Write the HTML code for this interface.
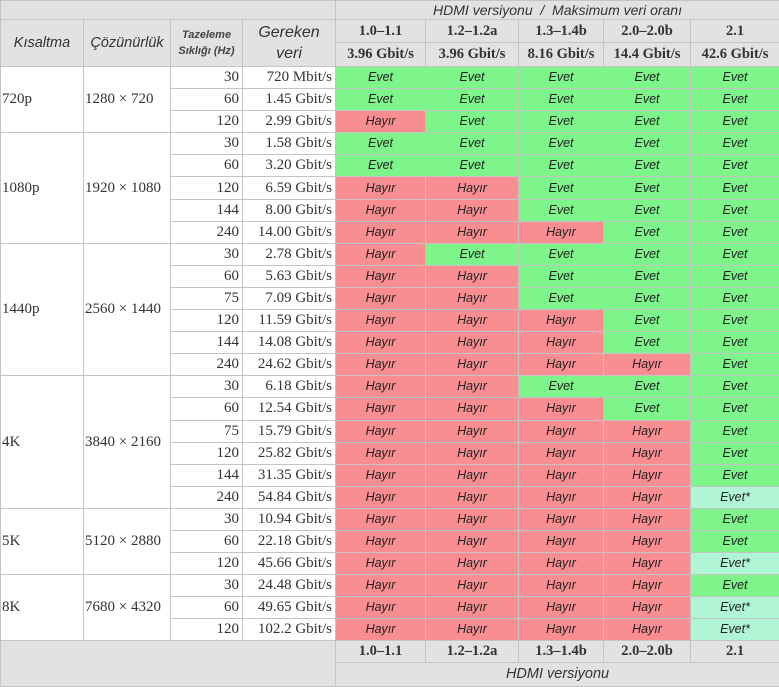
<!DOCTYPE html><html><head><meta charset="utf-8"><style>
body{margin:0;background:#fff;width:779px;height:687px;overflow:hidden}
table{border-collapse:collapse;table-layout:fixed;width:779px;font-family:"Liberation Serif",serif;font-size:15px;color:#333}
td{border:1px solid #c4c4c4;padding:0;overflow:hidden;white-space:nowrap;vertical-align:middle;line-height:15px}
tr.d td{height:21.1px}
.h{background:#e2e2e2;text-align:center}
.i{font-family:"Liberation Sans",sans-serif;font-style:italic}
.v{font-weight:bold;font-size:14.5px}
.g,.r,.c{font-family:"Liberation Sans",sans-serif;font-style:italic;font-size:12.5px;text-align:center;color:#222}
.g{background:#7df58a}.r{background:#f98e92}.c{background:#b0f6d6}
.n{text-align:right;padding-right:3px}
.l{padding-left:1px}
</style></head><body>
<table>
<colgroup><col style="width:83px"><col style="width:87px"><col style="width:72px"><col style="width:93px"><col style="width:90px"><col style="width:93px"><col style="width:85px"><col style="width:87px"><col style="width:89px"></colgroup>
<tr style="height:19px"><td class="h i" colspan="4" style="height:18px"></td><td class="h i" colspan="5" style="font-size:14px;height:18px">HDMI versiyonu &nbsp;/&nbsp; Maksimum veri oranı</td></tr>
<tr style="height:23px"><td class="h i" rowspan="2" style="font-size:14.5px">Kısaltma</td><td class="h i" rowspan="2" style="font-size:14.5px">Çözünürlük</td><td class="h i" rowspan="2" style="font-size:11px;line-height:16px;font-weight:bold;color:#444">Tazeleme<br>Sıklığı (Hz)</td><td class="h i" rowspan="2" style="font-size:16px;line-height:21px">Gereken<br>veri</td><td class="h v" style="height:22px">1.0–1.1</td><td class="h v">1.2–1.2a</td><td class="h v">1.3–1.4b</td><td class="h v">2.0–2.0b</td><td class="h v">2.1</td></tr>
<tr style="height:24px"><td class="h v" style="height:23px">3.96 Gbit/s</td><td class="h v">3.96 Gbit/s</td><td class="h v">8.16 Gbit/s</td><td class="h v">14.4 Gbit/s</td><td class="h v">42.6 Gbit/s</td></tr>

<tr class="d"><td class="l" rowspan="3">720p</td><td class="l" rowspan="3">1280 × 720</td><td class="n">30</td><td class="n">720 Mbit/s</td><td class="g">Evet</td><td class="g">Evet</td><td class="g">Evet</td><td class="g">Evet</td><td class="g">Evet</td></tr>
<tr class="d"><td class="n">60</td><td class="n">1.45 Gbit/s</td><td class="g">Evet</td><td class="g">Evet</td><td class="g">Evet</td><td class="g">Evet</td><td class="g">Evet</td></tr>
<tr class="d"><td class="n">120</td><td class="n">2.99 Gbit/s</td><td class="r">Hayır</td><td class="g">Evet</td><td class="g">Evet</td><td class="g">Evet</td><td class="g">Evet</td></tr>

<tr class="d"><td class="l" rowspan="5">1080p</td><td class="l" rowspan="5">1920 × 1080</td><td class="n">30</td><td class="n">1.58 Gbit/s</td><td class="g">Evet</td><td class="g">Evet</td><td class="g">Evet</td><td class="g">Evet</td><td class="g">Evet</td></tr>
<tr class="d"><td class="n">60</td><td class="n">3.20 Gbit/s</td><td class="g">Evet</td><td class="g">Evet</td><td class="g">Evet</td><td class="g">Evet</td><td class="g">Evet</td></tr>
<tr class="d"><td class="n">120</td><td class="n">6.59 Gbit/s</td><td class="r">Hayır</td><td class="r">Hayır</td><td class="g">Evet</td><td class="g">Evet</td><td class="g">Evet</td></tr>
<tr class="d"><td class="n">144</td><td class="n">8.00 Gbit/s</td><td class="r">Hayır</td><td class="r">Hayır</td><td class="g">Evet</td><td class="g">Evet</td><td class="g">Evet</td></tr>
<tr class="d"><td class="n">240</td><td class="n">14.00 Gbit/s</td><td class="r">Hayır</td><td class="r">Hayır</td><td class="r">Hayır</td><td class="g">Evet</td><td class="g">Evet</td></tr>

<tr class="d"><td class="l" rowspan="6">1440p</td><td class="l" rowspan="6">2560 × 1440</td><td class="n">30</td><td class="n">2.78 Gbit/s</td><td class="r">Hayır</td><td class="g">Evet</td><td class="g">Evet</td><td class="g">Evet</td><td class="g">Evet</td></tr>
<tr class="d"><td class="n">60</td><td class="n">5.63 Gbit/s</td><td class="r">Hayır</td><td class="r">Hayır</td><td class="g">Evet</td><td class="g">Evet</td><td class="g">Evet</td></tr>
<tr class="d"><td class="n">75</td><td class="n">7.09 Gbit/s</td><td class="r">Hayır</td><td class="r">Hayır</td><td class="g">Evet</td><td class="g">Evet</td><td class="g">Evet</td></tr>
<tr class="d"><td class="n">120</td><td class="n">11.59 Gbit/s</td><td class="r">Hayır</td><td class="r">Hayır</td><td class="r">Hayır</td><td class="g">Evet</td><td class="g">Evet</td></tr>
<tr class="d"><td class="n">144</td><td class="n">14.08 Gbit/s</td><td class="r">Hayır</td><td class="r">Hayır</td><td class="r">Hayır</td><td class="g">Evet</td><td class="g">Evet</td></tr>
<tr class="d"><td class="n">240</td><td class="n">24.62 Gbit/s</td><td class="r">Hayır</td><td class="r">Hayır</td><td class="r">Hayır</td><td class="r">Hayır</td><td class="g">Evet</td></tr>

<tr class="d"><td class="l" rowspan="6">4K</td><td class="l" rowspan="6">3840 × 2160</td><td class="n">30</td><td class="n">6.18 Gbit/s</td><td class="r">Hayır</td><td class="r">Hayır</td><td class="g">Evet</td><td class="g">Evet</td><td class="g">Evet</td></tr>
<tr class="d"><td class="n">60</td><td class="n">12.54 Gbit/s</td><td class="r">Hayır</td><td class="r">Hayır</td><td class="r">Hayır</td><td class="g">Evet</td><td class="g">Evet</td></tr>
<tr class="d"><td class="n">75</td><td class="n">15.79 Gbit/s</td><td class="r">Hayır</td><td class="r">Hayır</td><td class="r">Hayır</td><td class="r">Hayır</td><td class="g">Evet</td></tr>
<tr class="d"><td class="n">120</td><td class="n">25.82 Gbit/s</td><td class="r">Hayır</td><td class="r">Hayır</td><td class="r">Hayır</td><td class="r">Hayır</td><td class="g">Evet</td></tr>
<tr class="d"><td class="n">144</td><td class="n">31.35 Gbit/s</td><td class="r">Hayır</td><td class="r">Hayır</td><td class="r">Hayır</td><td class="r">Hayır</td><td class="g">Evet</td></tr>
<tr class="d"><td class="n">240</td><td class="n">54.84 Gbit/s</td><td class="r">Hayır</td><td class="r">Hayır</td><td class="r">Hayır</td><td class="r">Hayır</td><td class="c">Evet*</td></tr>

<tr class="d"><td class="l" rowspan="3">5K</td><td class="l" rowspan="3">5120 × 2880</td><td class="n">30</td><td class="n">10.94 Gbit/s</td><td class="r">Hayır</td><td class="r">Hayır</td><td class="r">Hayır</td><td class="r">Hayır</td><td class="g">Evet</td></tr>
<tr class="d"><td class="n">60</td><td class="n">22.18 Gbit/s</td><td class="r">Hayır</td><td class="r">Hayır</td><td class="r">Hayır</td><td class="r">Hayır</td><td class="g">Evet</td></tr>
<tr class="d"><td class="n">120</td><td class="n">45.66 Gbit/s</td><td class="r">Hayır</td><td class="r">Hayır</td><td class="r">Hayır</td><td class="r">Hayır</td><td class="c">Evet*</td></tr>

<tr class="d"><td class="l" rowspan="3">8K</td><td class="l" rowspan="3">7680 × 4320</td><td class="n">30</td><td class="n">24.48 Gbit/s</td><td class="r">Hayır</td><td class="r">Hayır</td><td class="r">Hayır</td><td class="r">Hayır</td><td class="g">Evet</td></tr>
<tr class="d"><td class="n">60</td><td class="n">49.65 Gbit/s</td><td class="r">Hayır</td><td class="r">Hayır</td><td class="r">Hayır</td><td class="r">Hayır</td><td class="c">Evet*</td></tr>
<tr class="d"><td class="n">120</td><td class="n">102.2 Gbit/s</td><td class="r">Hayır</td><td class="r">Hayır</td><td class="r">Hayır</td><td class="r">Hayır</td><td class="c">Evet*</td></tr>

<tr style="height:22px"><td class="h" colspan="4" rowspan="2"></td><td class="h v" style="height:21px">1.0–1.1</td><td class="h v">1.2–1.2a</td><td class="h v">1.3–1.4b</td><td class="h v">2.0–2.0b</td><td class="h v">2.1</td></tr>
<tr style="height:24px"><td class="h i" colspan="5" style="font-size:14.5px;height:23px">HDMI versiyonu</td></tr>
</table>
</body></html>
